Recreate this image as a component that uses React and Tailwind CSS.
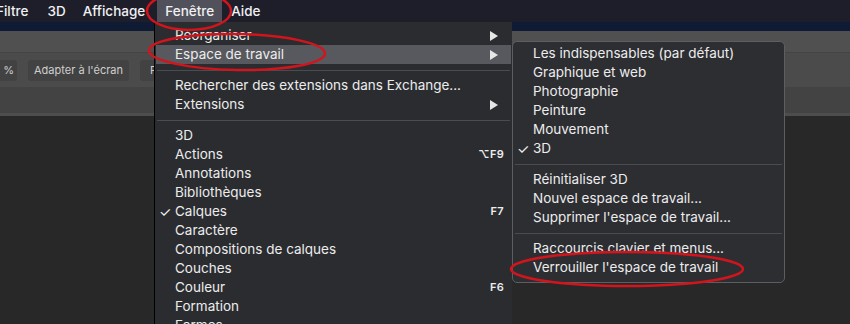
const mainItems = [
  { label: "Réorganiser", arrow: true },
  { label: "Espace de travail", arrow: true, active: true },
  { sep: true },
  { label: "Rechercher des extensions dans Exchange..." },
  { label: "Extensions", arrow: true },
  { sep: true },
  { label: "3D" },
  { label: "Actions", shortcut: "⌥F9" },
  { label: "Annotations" },
  { label: "Bibliothèques" },
  { label: "Calques", checked: true, shortcut: "F7" },
  { label: "Caractère" },
  { label: "Compositions de calques" },
  { label: "Couches" },
  { label: "Couleur", shortcut: "F6" },
  { label: "Formation" },
  { label: "Formes" },
];

const subItems = [
  { label: "Les indispensables (par défaut)" },
  { label: "Graphique et web" },
  { label: "Photographie" },
  { label: "Peinture" },
  { label: "Mouvement" },
  { label: "3D", checked: true },
  { sep: true },
  { label: "Réinitialiser 3D" },
  { label: "Nouvel espace de travail..." },
  { label: "Supprimer l'espace de travail..." },
  { sep: true },
  { label: "Raccourcis clavier et menus..." },
  { label: "Verrouiller l'espace de travail" },
];

const Arrow = () => (
  <svg width="8" height="10" viewBox="0 0 8 10" className="shrink-0">
    <path d="M0 0 L8 5 L0 10 Z" fill="#e6e6e6" />
  </svg>
);

const MenuRow = ({ item }) => {
  if (item.sep) {
    return (
      <div className="h-[12px] flex items-center px-[2px]">
        <div className="h-px w-full bg-[#4b4c51]" />
      </div>
    );
  }
  return (
    <div
      className={`relative h-[19px] flex items-center pl-[19px] pr-[13px] mx-[1px] ${
        item.active ? "bg-[#58595e]" : ""
      }`}
    >
      {item.checked && (
        <span className="absolute left-[3px] top-0 text-[14px] leading-[19px]">✓</span>
      )}
      <span className="flex-1 whitespace-nowrap">{item.label}</span>
      {item.shortcut && (
        <span className="mr-[-6px] text-[11px] font-semibold tracking-[0.3px]">{item.shortcut}</span>
      )}
      {item.arrow && <Arrow />}
    </div>
  );
};

export default function App() {
  const font = { fontFamily: "Inter, 'DejaVu Sans', sans-serif" };
  return (
    <div className="relative w-[850px] h-[324px] overflow-hidden bg-[#282828]" style={font}>
      {/* barre de menus */}
      <div className="h-[22px] bg-[#1d1e2a] flex items-center text-[13.5px] font-medium text-[#f0f0f2]">
        <span className="ml-[-4px]">Filtre</span>
        <span className="ml-[19px]">3D</span>
        <span className="ml-[17px]">Affichage</span>
        <span className="ml-[12px] h-full flex items-center px-[8px] bg-[#50515a]">Fenêtre</span>
        <span className="ml-[9px]">Aide</span>
      </div>
      <div className="h-[9px] bg-[#0f1b34]" />
      <div className="h-[22px] bg-[#505050] border-b border-[#444]" />
      <div className="h-[34px] bg-[#4b4b4b] flex items-center gap-[11px] text-[11px] text-[#cfcfcf]">
        <div className="h-[21px] w-[17px] bg-[#424242] rounded-r-[3px] flex items-center justify-end pr-[3px]">%</div>
        <div className="h-[21px] w-[101px] bg-[#424242] rounded-[3px] flex items-center justify-center">Adapter à l'écran</div>
        <div className="h-[21px] w-[40px] bg-[#424242] rounded-[3px] flex items-center pl-[10px]">F</div>
      </div>
      <div className="h-[29px] bg-[#434343] border-b-[3px] border-[#4d4d4d]" />

      {/* menu Fenêtre */}
      <div className="absolute left-[154px] top-[22px] w-[358px] h-[320px] bg-[#2b2c30] border-l border-black pt-[4px] text-[13.5px] text-[#ececec]">
        {mainItems.map((item, i) => (
          <MenuRow key={i} item={item} />
        ))}
      </div>

      {/* sous-menu Espace de travail */}
      <div className="absolute left-[512px] top-[41px] w-[273px] h-[242px] bg-[#2d2e32] border border-[#5d5e63] rounded-[5px] pt-[2px] text-[13.5px] text-[#ececec]">
        {subItems.map((item, i) => (
          <MenuRow key={i} item={item} />
        ))}
      </div>

      {/* annotations rouges */}
      <svg className="absolute inset-0 pointer-events-none" width="850" height="324">
        <g fill="none" stroke="#d2141c" strokeWidth="2.5">
          <ellipse cx="189" cy="11" rx="42" ry="19" />
          <ellipse cx="237" cy="52" rx="88" ry="18" transform="rotate(1 237 52)" />
          <ellipse cx="627" cy="269" rx="116" ry="17" />
        </g>
      </svg>
    </div>
  );
}
